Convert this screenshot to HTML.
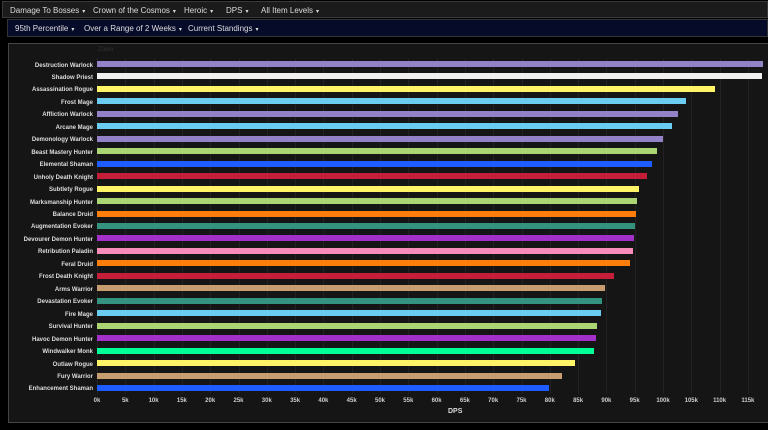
<!DOCTYPE html><html><head><style>
body{margin:0;width:768px;height:430px;background:#000;font-family:"Liberation Sans",sans-serif;overflow:hidden;position:relative}
.bar1{position:absolute;left:2px;top:1px;width:766px;height:17px;background:#1b1b1b;border:1px solid #3a3a3a;box-sizing:border-box}
.bar2{position:absolute;left:7px;top:19px;width:761px;height:18px;background:#070b2a;border:1px solid #333;box-sizing:border-box}
.it{position:absolute;color:#ddd;font-size:8px;top:4px;white-space:nowrap}
.it i{font-style:normal;font-size:6px;margin-left:3px}
.panel{position:absolute;left:8px;top:43px;width:762px;height:380px;background:#151515;border:1px solid #444;box-sizing:border-box}
.lab{position:absolute;right:675px;font-size:6px;line-height:6px;font-weight:bold;color:#ddd;white-space:nowrap;text-align:right}
.b{position:absolute;left:97px;height:6px}
.g{position:absolute;top:58px;height:336px;width:1px;background:#222}
.t{position:absolute;top:398px;font-size:6px;font-weight:bold;color:#ccc;width:30px;margin-left:-15px;text-align:center}
</style></head><body>
<div class="bar1">
<span class="it" style="left:7px">Damage To Bosses<i>▾</i></span>
<span class="it" style="left:90px">Crown of the Cosmos<i>▾</i></span>
<span class="it" style="left:181px">Heroic<i>▾</i></span>
<span class="it" style="left:223px">DPS<i>▾</i></span>
<span class="it" style="left:258px">All Item Levels<i>▾</i></span>
</div>
<div class="bar2">
<span class="it" style="left:7px">95th Percentile<i>▾</i></span>
<span class="it" style="left:76px">Over a Range of 2 Weeks<i>▾</i></span>
<span class="it" style="left:180px">Current Standings<i>▾</i></span>
</div>
<div class="panel"></div>
<div style="position:absolute;left:98px;top:47px;font-size:6px;color:#333">Zoom</div>
<div id="c"></div>
<div style="position:absolute;left:448px;top:408px;font-size:7px;font-weight:bold;color:#ddd">DPS</div>
<script>
var d=[["Destruction Warlock",763,"#9482c9"],["Shadow Priest",762,"#f0f0f0"],["Assassination Rogue",715,"#fff468"],["Frost Mage",686,"#69ccf0"],["Affliction Warlock",678,"#9482c9"],["Arcane Mage",672,"#69ccf0"],["Demonology Warlock",663,"#9482c9"],["Beast Mastery Hunter",657,"#abd473"],["Elemental Shaman",652,"#1e5cff"],["Unholy Death Knight",647,"#c41e3a"],["Subtlety Rogue",639,"#fff468"],["Marksmanship Hunter",637,"#abd473"],["Balance Druid",636,"#ff7d0a"],["Augmentation Evoker",635,"#33937f"],["Devourer Demon Hunter",634,"#a330c9"],["Retribution Paladin",633,"#f58cba"],["Feral Druid",630,"#ff7d0a"],["Frost Death Knight",614,"#c41e3a"],["Arms Warrior",605,"#c79c6e"],["Devastation Evoker",602,"#33937f"],["Fire Mage",601,"#69ccf0"],["Survival Hunter",597,"#abd473"],["Havoc Demon Hunter",596,"#a330c9"],["Windwalker Monk",594,"#00ff96"],["Outlaw Rogue",575,"#fff468"],["Fury Warrior",562,"#c79c6e"],["Enhancement Shaman",549,"#1e5cff"]];
var h="";
for(var k=0;k<=23;k++){var x=97+k*28.3;h+='<div class="g" style="left:'+x+'px"></div><div class="t" style="left:'+x+'px">'+(k*5)+'k</div>';}
d.forEach(function(r,i){var y=64+i*12.46;h+='<div class="lab" style="top:'+(y-1.5)+'px">'+r[0]+'</div><div class="b" style="top:'+(y-3)+'px;width:'+(r[1]-97)+'px;background:'+r[2]+'"></div>';});
document.getElementById("c").innerHTML=h;
</script>
</body></html>
